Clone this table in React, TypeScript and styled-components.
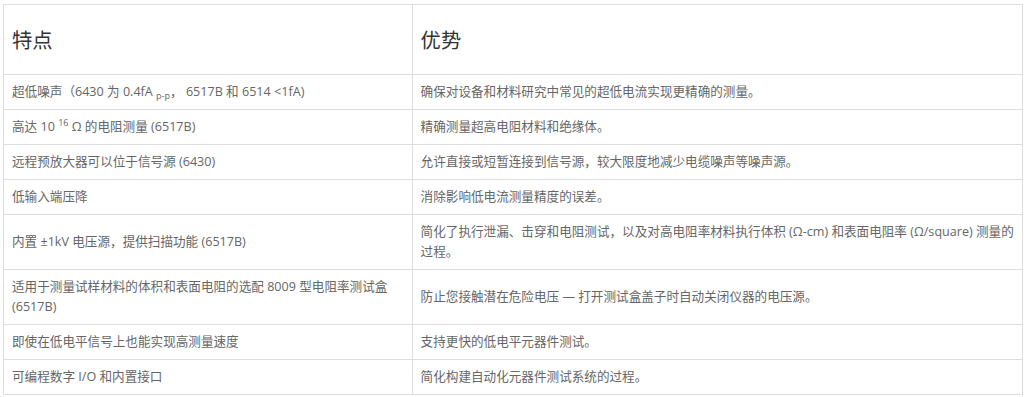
import React from "react";
import styled, { createGlobalStyle } from "styled-components";

const GlobalStyle = createGlobalStyle`
  html, body {
    margin: 0;
    padding: 0;
    background: #ffffff;
  }
  body {
    font-family: "Open Sans", "Noto Sans CJK SC", sans-serif;
  }
`;

const Page = styled.div`
  padding: 4px 4px 0 3px;
`;

const Table = styled.table`
  width: 100%;
  border-collapse: collapse;
  table-layout: fixed;
  border: 1px solid #dddddd;
`;

const Col = styled.col<{ $w: string }>`
  width: ${(p) => p.$w};
`;

const HeadCell = styled.th`
  border: 1px solid #dddddd;
  padding: 19px 8px;
  height: 70px;
  box-sizing: border-box;
  text-align: left;
  font-weight: 400;
  font-size: 20.3px;
  line-height: 30px;
  color: #333333;
  vertical-align: middle;
`;

const Cell = styled.td`
  border: 1px solid #dddddd;
  padding: 7px 8px;
  font-size: 12.6px;
  line-height: 20px;
  color: #666666;
  vertical-align: middle;
`;

const Sub = styled.span`
  font-size: 9px;
  line-height: 0;
  vertical-align: -3px;
`;

const Sup = styled.span`
  font-size: 9px;
  line-height: 0;
  vertical-align: 5px;
`;

type Row = { left: React.ReactNode; right: React.ReactNode };

const rows: Row[] = [
  {
    left: (
      <>
        超低噪声（6430 为 0.4fA <Sub>p-p</Sub>， 6517B 和 6514 &lt;1fA)
      </>
    ),
    right: "确保对设备和材料研究中常见的超低电流实现更精确的测量。",
  },
  {
    left: (
      <>
        高达 10 <Sup>16</Sup> Ω 的电阻测量 (6517B)
      </>
    ),
    right: "精确测量超高电阻材料和绝缘体。",
  },
  {
    left: "远程预放大器可以位于信号源 (6430)",
    right: "允许直接或短暂连接到信号源，较大限度地减少电缆噪声等噪声源。",
  },
  {
    left: "低输入端压降",
    right: "消除影响低电流测量精度的误差。",
  },
  {
    left: "内置 ±1kV 电压源，提供扫描功能 (6517B)",
    right:
      "简化了执行泄漏、击穿和电阻测试，以及对高电阻率材料执行体积 (Ω-cm) 和表面电阻率 (Ω/square) 测量的过程。",
  },
  {
    left: "适用于测量试样材料的体积和表面电阻的选配 8009 型电阻率测试盒 (6517B)",
    right: "防止您接触潜在危险电压 — 打开测试盒盖子时自动关闭仪器的电压源。",
  },
  {
    left: "即使在低电平信号上也能实现高测量速度",
    right: "支持更快的低电平元器件测试。",
  },
  {
    left: "可编程数字 I/O 和内置接口",
    right: "简化构建自动化元器件测试系统的过程。",
  },
];

export default function App() {
  return (
    <>
      <GlobalStyle />
      <Page>
        <Table>
          <colgroup>
            <Col $w="40.1%" />
            <Col $w="59.9%" />
          </colgroup>
          <thead>
            <tr>
              <HeadCell>特点</HeadCell>
              <HeadCell>优势</HeadCell>
            </tr>
          </thead>
          <tbody>
            {rows.map((r, i) => (
              <tr key={i}>
                <Cell>{r.left}</Cell>
                <Cell>{r.right}</Cell>
              </tr>
            ))}
          </tbody>
        </Table>
      </Page>
    </>
  );
}
